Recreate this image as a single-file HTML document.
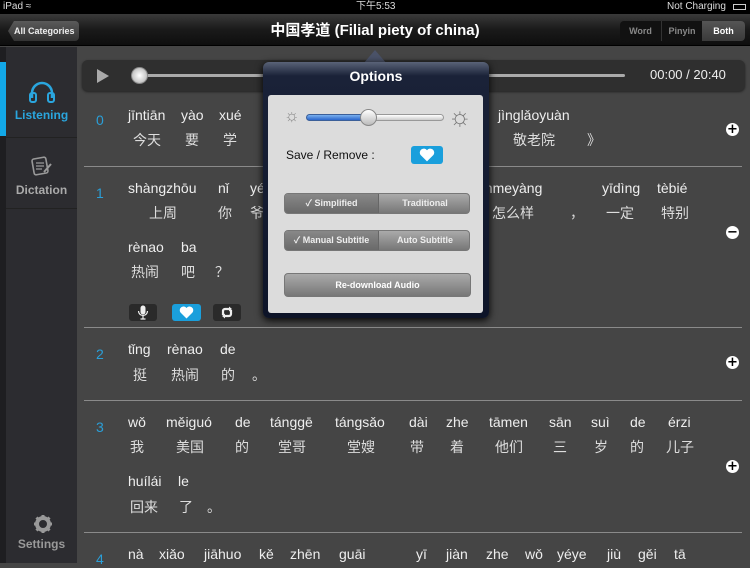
<!DOCTYPE html>
<html><head><meta charset="utf-8"><style>
*{margin:0;padding:0;box-sizing:border-box}
body{width:750px;height:563px;overflow:hidden;background:#454545;position:relative;font-family:"Liberation Sans","Noto Sans CJK SC",sans-serif;color:#eee}
.a{position:absolute;white-space:nowrap}
.p{font-size:14px;line-height:18px;color:#eee}
.c{font-size:14px;line-height:18px;color:#ddd}
.n{font-size:14px;color:#2a9fd8;line-height:18px}
.sep{position:absolute;left:84px;width:658px;height:1px;background:#8a8a8a}
.pm{position:absolute;width:13px;height:13px;border-radius:50%;background:#fff;color:#000;font:bold 13px/13px "DejaVu Sans",sans-serif;text-align:center}
</style></head><body>
<div class="a" style="left:0;top:0;width:750px;height:14px;background:#000"></div>
<div class="a" style="left:3px;top:0;font-size:10px;line-height:14px;color:#ddd">iPad ≈</div>
<div class="a" style="left:356px;top:0;font-size:10px;line-height:14px;color:#ddd">下午5:53</div>
<div class="a" style="left:667px;top:0;font-size:10px;line-height:14px;color:#ddd">Not Charging</div>
<div class="a" style="left:733px;top:4px;width:13px;height:6px;border:1px solid #ccc"></div>
<div class="a" style="left:0;top:14px;width:750px;height:32px;background:linear-gradient(#3a3a3a,#1a1a1a 50%,#0e0e0e);border-bottom:1px solid #000"></div>
<div class="a" style="left:8px;top:21px;width:71px;height:20px;background:linear-gradient(#5a5a5a,#333);border-radius:4px;font-size:9px;font-weight:bold;line-height:20px;padding-left:6px;color:#eee;clip-path:polygon(6px 0,100% 0,100% 100%,6px 100%,0 50%)">All Categories</div>
<div class="a" style="left:0;top:20px;width:750px;text-align:center;font-size:15px;font-weight:bold;line-height:22px;color:#fff">中国孝道 (Filial piety of china)</div>
<div class="a" style="left:620px;top:21px;width:125px;height:20px;border-radius:4px;background:#111;overflow:hidden;font-size:9px;font-weight:bold;line-height:20px">
<span class="a" style="left:0;width:41px;text-align:center;color:#888">Word</span>
<span class="a" style="left:41px;width:41px;text-align:center;color:#888;border-left:1px solid #333">Pinyin</span>
<span class="a" style="left:82px;width:43px;height:20px;text-align:center;color:#fff;background:linear-gradient(#555,#3a3a3a)">Both</span></div>
<div class="a" style="left:0;top:47px;width:77px;height:516px;background:#2c2c30"></div>
<div class="a" style="left:0;top:47px;width:6px;height:516px;background:#1e1e21"></div>
<div class="a" style="left:0;top:62px;width:6px;height:74px;background:#12a8e8"></div>
<div class="a" style="left:6px;top:137px;width:71px;height:1px;background:#222"></div>
<div class="a" style="left:6px;top:208px;width:71px;height:1px;background:#222"></div>
<svg class="a" style="left:28px;top:80px" width="28" height="24" viewBox="0 0 28 24"><path d="M4 18 V13 a10 10 0 0 1 20 0 V18" fill="none" stroke="#2aa6de" stroke-width="2.5"/><rect x="2" y="13" width="6" height="9" rx="2" fill="none" stroke="#2aa6de" stroke-width="2"/><rect x="20" y="13" width="6" height="9" rx="2" fill="none" stroke="#2aa6de" stroke-width="2"/></svg>
<div class="a" style="left:6px;top:108px;width:71px;text-align:center;font-size:12px;font-weight:bold;color:#2aa6de">Listening</div>
<svg class="a" style="left:31px;top:155px" width="22" height="22" viewBox="0 0 22 22"><rect x="2" y="3" width="14" height="16" rx="2" transform="rotate(-10 9 11)" fill="none" stroke="#999" stroke-width="1.6"/><path d="M5 8h8M5 11h8M5 14h6" stroke="#999" stroke-width="1.3"/><path d="M13 17 L20 9" stroke="#999" stroke-width="2"/></svg>
<div class="a" style="left:6px;top:183px;width:71px;text-align:center;font-size:12px;font-weight:bold;color:#aaa">Dictation</div>
<svg class="a" style="left:33px;top:514px" width="20" height="20" viewBox="0 0 20 20"><circle cx="10" cy="10" r="6" fill="none" stroke="#999" stroke-width="4"/><path d="M10 1v4M10 15v4M1 10h4M15 10h4M3.5 3.5l3 3M13.5 13.5l3 3M3.5 16.5l3-3M13.5 6.5l3-3" stroke="#999" stroke-width="3"/></svg>
<div class="a" style="left:6px;top:537px;width:71px;text-align:center;font-size:12px;font-weight:bold;color:#999">Settings</div>
<div class="a" style="left:82px;top:60px;width:663px;height:31px;background:#2f2f2f;border-radius:6px;box-shadow:0 1px 2px #222"></div>
<div class="a" style="left:97px;top:69px;width:0;height:0;border-left:12px solid #aaa;border-top:7px solid transparent;border-bottom:7px solid transparent"></div>
<div class="a" style="left:140px;top:74px;width:485px;height:3px;background:#aaa;border-radius:2px"></div>
<div class="a" style="left:131px;top:67px;width:17px;height:17px;border-radius:50%;background:radial-gradient(#fff,#aaa);border:1px solid #888"></div>
<div class="a" style="left:650px;top:67px;font-size:13px;color:#eee">00:00 / 20:40</div>
<div class="a n" style="left:96px;top:111px">0</div>
<div class="a p" style="left:128px;top:106px">jīntiān</div><div class="a p" style="left:181px;top:106px">yào</div><div class="a p" style="left:219px;top:106px">xué</div>
<div class="a c" style="left:133px;top:131px">今天</div><div class="a c" style="left:185px;top:131px">要</div><div class="a c" style="left:223px;top:131px">学</div>
<div class="a p" style="left:498px;top:106px">jìnglǎoyuàn</div><div class="a c" style="left:513px;top:131px">敬老院</div><div class="a c" style="left:587px;top:131px">》</div>
<div class="pm" style="left:726px;top:123px">+</div>
<div class="sep" style="top:166px"></div>
<div class="a n" style="left:96px;top:184px">1</div>
<div class="a p" style="left:128px;top:179px">shàngzhōu</div><div class="a p" style="left:218px;top:179px">nǐ</div><div class="a p" style="left:250px;top:179px">yéye</div>
<div class="a c" style="left:149px;top:204px">上周</div><div class="a c" style="left:218px;top:204px">你</div><div class="a c" style="left:250px;top:204px">爷爷</div>
<div class="a p" style="left:470px;top:179px">zěnmeyàng</div><div class="a c" style="left:492px;top:204px">怎么样</div><div class="a c" style="left:570px;top:204px">，</div>
<div class="a p" style="left:602px;top:179px">yīdìng</div><div class="a c" style="left:606px;top:204px">一定</div>
<div class="a p" style="left:657px;top:179px">tèbié</div><div class="a c" style="left:661px;top:204px">特别</div>
<div class="pm" style="left:726px;top:226px">−</div>
<div class="a p" style="left:128px;top:238px">rènao</div><div class="a p" style="left:181px;top:238px">ba</div>
<div class="a c" style="left:131px;top:263px">热闹</div><div class="a c" style="left:181px;top:263px">吧</div><div class="a c" style="left:215px;top:263px">？</div>
<div class="a" style="left:129px;top:304px;width:28px;height:17px;background:#2a2a2a;border-radius:3px"></div>
<svg class="a" style="left:137px;top:305px" width="12" height="15" viewBox="0 0 12 15"><rect x="3.5" y="0.5" width="5" height="9" rx="2.5" fill="#eee"/><path d="M1.5 6a4.5 4.5 0 0 0 9 0M6 11v3M3.5 14h5" stroke="#eee" fill="none" stroke-width="1.2"/></svg>
<div class="a" style="left:172px;top:304px;width:29px;height:17px;background:#1a9fdc;border-radius:3px"></div>
<svg class="a" style="left:179px;top:306px" width="15" height="13" viewBox="0 0 15 13"><path d="M7.5 12.5 L1.5 6.5 A3.3 3.3 0 0 1 7.5 2 A3.3 3.3 0 0 1 13.5 6.5Z" fill="#fff"/></svg>
<div class="a" style="left:213px;top:304px;width:28px;height:17px;background:#2a2a2a;border-radius:3px"></div>
<svg class="a" style="left:220px;top:306px" width="14" height="13" viewBox="0 0 14 13"><path d="M3 9V5a2 2 0 0 1 2-2h5M11 4v4a2 2 0 0 1-2 2H4" stroke="#eee" stroke-width="2.2" fill="none"/><path d="M9 0.5l3 2.5-3 2.5z M5 7.5l-3 2.5 3 2.5z" fill="#eee"/></svg>
<div class="sep" style="top:327px"></div>
<div class="a n" style="left:96px;top:345px">2</div>
<div class="a p" style="left:128px;top:340px">tǐng</div><div class="a p" style="left:167px;top:340px">rènao</div><div class="a p" style="left:220px;top:340px">de</div>
<div class="a c" style="left:133px;top:366px">挺</div><div class="a c" style="left:171px;top:366px">热闹</div><div class="a c" style="left:221px;top:366px">的</div><div class="a c" style="left:252px;top:366px">。</div>
<div class="pm" style="left:726px;top:356px">+</div>
<div class="sep" style="top:400px"></div>
<div class="a n" style="left:96px;top:418px">3</div>
<div class="a p" style="left:128px;top:413px">wǒ</div><div class="a p" style="left:166px;top:413px">měiguó</div><div class="a p" style="left:235px;top:413px">de</div><div class="a p" style="left:270px;top:413px">tánggē</div><div class="a p" style="left:335px;top:413px">tángsǎo</div><div class="a p" style="left:409px;top:413px">dài</div><div class="a p" style="left:446px;top:413px">zhe</div><div class="a p" style="left:489px;top:413px">tāmen</div><div class="a p" style="left:549px;top:413px">sān</div><div class="a p" style="left:591px;top:413px">suì</div><div class="a p" style="left:630px;top:413px">de</div><div class="a p" style="left:668px;top:413px">érzi</div>
<div class="a c" style="left:130px;top:438px">我</div><div class="a c" style="left:176px;top:438px">美国</div><div class="a c" style="left:235px;top:438px">的</div><div class="a c" style="left:278px;top:438px">堂哥</div><div class="a c" style="left:347px;top:438px">堂嫂</div><div class="a c" style="left:410px;top:438px">带</div><div class="a c" style="left:450px;top:438px">着</div><div class="a c" style="left:495px;top:438px">他们</div><div class="a c" style="left:553px;top:438px">三</div><div class="a c" style="left:594px;top:438px">岁</div><div class="a c" style="left:630px;top:438px">的</div><div class="a c" style="left:666px;top:438px">儿子</div>
<div class="pm" style="left:726px;top:460px">+</div>
<div class="a p" style="left:128px;top:472px">huílái</div><div class="a p" style="left:178px;top:472px">le</div>
<div class="a c" style="left:130px;top:498px">回来</div><div class="a c" style="left:179px;top:498px">了</div><div class="a c" style="left:207px;top:498px">。</div>
<div class="sep" style="top:532px"></div>
<div class="a n" style="left:96px;top:550px">4</div>
<div class="a p" style="left:128px;top:545px">nà</div><div class="a p" style="left:159px;top:545px">xiǎo</div><div class="a p" style="left:204px;top:545px">jiāhuo</div><div class="a p" style="left:259px;top:545px">kě</div><div class="a p" style="left:290px;top:545px">zhēn</div><div class="a p" style="left:339px;top:545px">guāi</div><div class="a p" style="left:416px;top:545px">yī</div><div class="a p" style="left:446px;top:545px">jiàn</div><div class="a p" style="left:486px;top:545px">zhe</div><div class="a p" style="left:525px;top:545px">wǒ</div><div class="a p" style="left:557px;top:545px">yéye</div><div class="a p" style="left:607px;top:545px">jiù</div><div class="a p" style="left:638px;top:545px">gěi</div><div class="a p" style="left:674px;top:545px">tā</div>
<div class="a" style="left:363px;top:50px;width:24px;height:14px;background:#4a5268;clip-path:polygon(50% 0,100% 100%,0 100%)"></div>
<div class="a" style="left:263px;top:62px;width:226px;height:256px;border-radius:6px;background:linear-gradient(#5a6378,#1a2238 14px,#0d1428);box-shadow:0 2px 8px #000"></div>
<div class="a" style="left:263px;top:68px;width:226px;text-align:center;font-size:14px;font-weight:bold;color:#fff">Options</div>
<div class="a" style="left:268px;top:95px;width:215px;height:218px;background:#dcdcdc;border-radius:3px"></div>
<div class="a" style="left:284px;top:106px;font-size:17px;color:#888;line-height:20px">☼</div>
<div class="a" style="left:306px;top:114px;width:64px;height:7px;border-radius:4px;background:linear-gradient(#7ab0ee,#2a66cc);border:1px solid #3b5f99"></div>
<div class="a" style="left:368px;top:114px;width:76px;height:7px;border-radius:4px;background:linear-gradient(#fff,#ccc);border:1px solid #999"></div>
<div class="a" style="left:360px;top:109px;width:17px;height:17px;border-radius:50%;background:linear-gradient(#fff,#bbb);border:1px solid #888"></div>
<div class="a" style="left:448px;top:102px;font-size:26px;color:#777;line-height:28px">☼</div>
<div class="a" style="left:286px;top:148px;font-size:12px;color:#111">Save / Remove :</div>
<div class="a" style="left:411px;top:146px;width:32px;height:18px;background:#1a9fdc;border-radius:3px"></div>
<svg class="a" style="left:419px;top:148px" width="16" height="14" viewBox="0 0 15 13"><path d="M7.5 12.5 L1.5 6.5 A3.3 3.3 0 0 1 7.5 2 A3.3 3.3 0 0 1 13.5 6.5Z" fill="#fff"/></svg>
<div class="a" style="left:284px;top:193px;width:186px;height:21px;border-radius:4px;border:1px solid #777;background:linear-gradient(#aaa,#777);overflow:hidden;font-size:9px;font-weight:bold;color:#eee;line-height:19px">
<span class="a" style="left:0;width:93px;height:21px;text-align:center;background:linear-gradient(#888,#666)">✓ Simplified</span>
<span class="a" style="left:93px;width:93px;text-align:center;border-left:1px solid #666">Traditional</span></div>
<div class="a" style="left:284px;top:230px;width:186px;height:21px;border-radius:4px;border:1px solid #777;background:linear-gradient(#aaa,#777);overflow:hidden;font-size:9px;font-weight:bold;color:#eee;line-height:19px">
<span class="a" style="left:0;width:93px;height:21px;text-align:center;background:linear-gradient(#888,#666)">✓ Manual Subtitle</span>
<span class="a" style="left:93px;width:93px;text-align:center;border-left:1px solid #666">Auto Subtitle</span></div>
<div class="a" style="left:284px;top:273px;width:187px;height:24px;border-radius:4px;border:1px solid #777;background:linear-gradient(#aaa,#777);font-size:9px;font-weight:bold;color:#fff;line-height:22px;text-align:center">Re-download Audio</div>
</body></html>
